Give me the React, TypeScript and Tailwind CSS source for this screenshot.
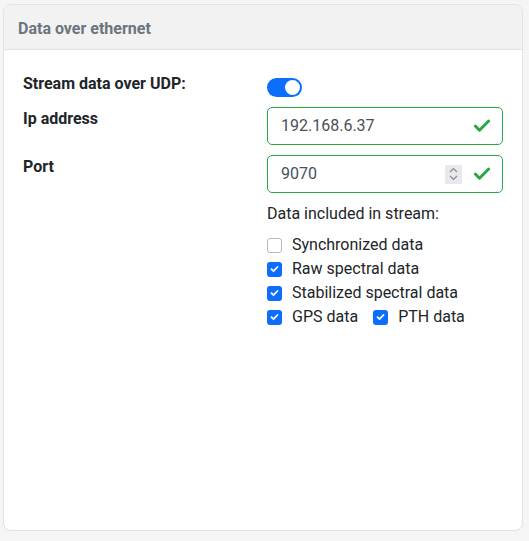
import { Check } from "lucide-react";

function Toggle({ on }: { on: boolean }) {
  return (
    <div
      className={`mt-[6px] flex h-[19px] w-[35px] items-center rounded-full px-[2px] ${
        on ? "justify-end bg-[#0d6efd]" : "justify-start bg-white border border-gray-300"
      }`}
    >
      <div className="h-[15px] w-[15px] rounded-full bg-white" />
    </div>
  );
}

function ValidInput({ value, spinner }: { value: string; spinner?: boolean }) {
  return (
    <div className="flex h-[38px] items-center rounded-[5px] border border-[#28a745] pl-[13px] pr-[10px]">
      <span className="flex-1 text-[16px] text-[#495057]">{value}</span>
      {spinner && (
        <div className="mr-[10px] flex h-[19px] w-[17px] flex-col items-center justify-center bg-[#e9e9ed]">
          <svg width="9" height="14" viewBox="0 0 9 14" fill="none" stroke="#8a8a8e" strokeWidth="1.2">
            <path d="M1 5l3.5-3.5L8 5" />
            <path d="M1 9l3.5 3.5L8 9" />
          </svg>
        </div>
      )}
      <Check className="h-[20px] w-[20px] text-[#28a745]" strokeWidth={3.5} />
    </div>
  );
}

function Box({ label, checked }: { label: string; checked: boolean }) {
  return (
    <label className="flex h-[24px] items-center gap-[10px]">
      <span
        className={`flex h-[15px] w-[15px] items-center justify-center rounded-[3px] ${
          checked ? "bg-[#0d6efd]" : "border border-[#b5bac0] bg-white"
        }`}
      >
        {checked && (
          <svg width="9" height="8" viewBox="0 0 9 8" fill="none" stroke="white" strokeWidth="1.8" strokeLinecap="round" strokeLinejoin="round">
            <path d="M1.5 4.2l2 2L7.5 2" />
          </svg>
        )}
      </span>
      <span className="text-[16px] text-[#212529]">{label}</span>
    </label>
  );
}

export default function App() {
  return (
    <div className="h-[541px] w-[529px] bg-[#f5f5f5] pl-[3px] pt-[4px] font-['Roboto',sans-serif]">
      <div className="flex h-[527px] w-[520px] flex-col overflow-hidden rounded-[8px] border border-[#e2e2e2] bg-white">
        <div className="flex h-[45px] items-center border-b border-[#e2e2e2] bg-[#f2f2f2] px-[14px] pt-[3px]">
          <h2 className="text-[16px] font-bold text-[#6c757d]">Data over ethernet</h2>
        </div>

        <div className="flex flex-col gap-[10px] pl-[19px] pr-[19px] pt-[22px]">
          <div className="flex">
            <div className="w-[244px] text-[16px] leading-[24px] font-bold text-[#212529]">Stream data over UDP:</div>
            <Toggle on />
          </div>
          <div className="flex">
            <div className="w-[244px] text-[16px] leading-[24px] font-bold text-[#212529]">Ip address</div>
            <div className="flex-1">
              <ValidInput value="192.168.6.37" />
            </div>
          </div>
          <div className="flex">
            <div className="w-[244px] text-[16px] leading-[24px] font-bold text-[#212529]">Port</div>
            <div className="flex-1">
              <ValidInput value="9070" spinner />
            </div>
          </div>
          <div className="flex">
            <div className="w-[244px]" />
            <div className="flex-1">
              <p className="text-[16px] leading-[22px] text-[#212529]">Data included in stream:</p>
              <div className="mt-[8px] flex flex-col">
                <Box label="Synchronized data" checked={false} />
                <Box label="Raw spectral data" checked />
                <Box label="Stabilized spectral data" checked />
                <div className="flex gap-[15px]">
                  <Box label="GPS data" checked />
                  <Box label="PTH data" checked />
                </div>
              </div>
            </div>
          </div>
        </div>
      </div>
    </div>
  );
}
